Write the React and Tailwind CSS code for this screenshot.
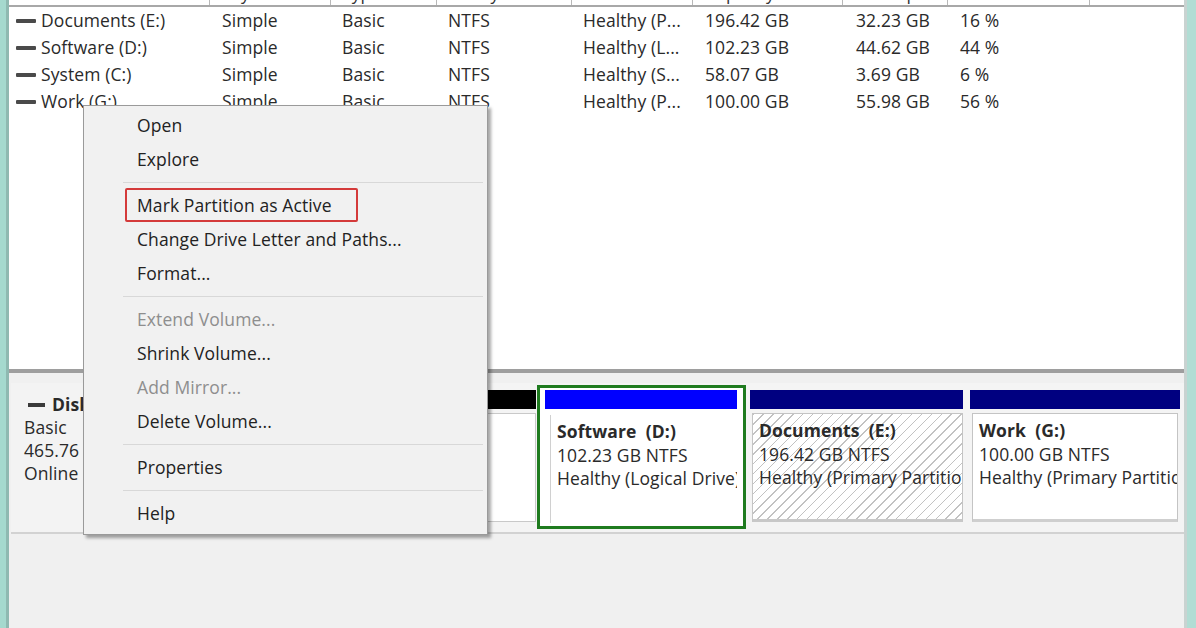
import React from "react";

const rows = [
  ["Documents (E:)", "Simple", "Basic", "NTFS", "Healthy (P...", "196.42 GB", "32.23 GB", "16 %"],
  ["Software (D:)", "Simple", "Basic", "NTFS", "Healthy (L...", "102.23 GB", "44.62 GB", "44 %"],
  ["System (C:)", "Simple", "Basic", "NTFS", "Healthy (S...", "58.07 GB", "3.69 GB", "6 %"],
  ["Work (G:)", "Simple", "Basic", "NTFS", "Healthy (P...", "100.00 GB", "55.98 GB", "56 %"],
];

const headers = ["Volume", "Layout", "Type", "File System", "Status", "Capacity", "Free Spa...", "% Free"];
const colClasses = [
  "w-[201px] pl-[7px]",
  "w-[121px] pl-[12px]",
  "w-[106px] pl-[11px]",
  "w-[135px] pl-[11px]",
  "w-[121px] pl-[11px]",
  "w-[150px] pl-[12px]",
  "w-[105px] pl-[13px]",
  "w-[142px] pl-[12px]",
];

const menu = [
  { t: "Open" },
  { t: "Explore" },
  { sep: true },
  { t: "Mark Partition as Active", red: true },
  { t: "Change Drive Letter and Paths..." },
  { t: "Format..." },
  { sep: true },
  { t: "Extend Volume...", dis: true },
  { t: "Shrink Volume..." },
  { t: "Add Mirror...", dis: true },
  { t: "Delete Volume..." },
  { sep: true },
  { t: "Properties" },
  { sep: true },
  { t: "Help" },
];

function VolIcon() {
  return <div className="w-[20px] h-[4px] bg-[#4a4a4a] rounded-[1px] mr-[5px] shrink-0" />;
}

export default function App() {
  return (
    <div className="w-[1196px] h-[628px] flex overflow-hidden relative bg-[#efefef] text-[#2a2a2a] font-['Open_Sans','Noto_Sans',sans-serif] text-[17.5px] tracking-[0.1px]">
      {/* left frame */}
      <div className="w-[9px] shrink-0 bg-[#a5d9ce] border-r-[3px] border-[#8fb9b1]" />

      {/* main */}
      <div className="flex-1 flex flex-col min-w-0">
        {/* list view */}
        <div className="h-[369px] bg-white overflow-hidden shrink-0">
          <div className="flex h-[26px] mt-[-19px] border-b-2 border-[#a8a8a8] text-[#333]">
            {headers.map((h, i) => (
              <div key={i} className={`${colClasses[i]} flex items-center border-r border-[#b8b8b8] whitespace-nowrap overflow-hidden`}>
                {h}
              </div>
            ))}
          </div>
          {rows.map((r, ri) => (
            <div key={ri} className="flex h-[27px] items-center">
              {r.map((c, ci) => (
                <div key={ci} className={`${colClasses[ci]} flex items-center whitespace-nowrap`}>
                  {ci === 0 && <VolIcon />}
                  {c}
                </div>
              ))}
            </div>
          ))}
        </div>
        <div className="h-[4px] bg-[#9e9e9e] shrink-0" />

        {/* graphical view */}
        <div className="flex-1 bg-[#f0f0f0] pt-[10px] pl-[2px]">
          <div className="flex h-[151px] border-b-2 border-[#d2d2d2] bg-[#f4f4f4]">
            {/* disk label */}
            <div className="w-[189px] shrink-0 pl-[13px] pt-[10px] leading-[23px] bg-[#f3f3f3]">
              <div className="flex items-center font-bold ml-[4px]">
                <div className="w-[17px] h-[4px] bg-[#3a3a3a] mr-[7px]" />
                Disk 0
              </div>
              <div>Basic</div>
              <div>465.76 GB</div>
              <div>Online</div>
            </div>
            {/* System partition */}
            <div className="w-[337px] shrink-0 flex flex-col pt-[7px] px-[1px]">
              <div className="h-[19px] bg-black" />
              <div className="mt-[4px] h-[109px] bg-white border border-[#c9c9c9]" />
            </div>
            {/* Software partition (selected) */}
            <div className="w-[209px] shrink-0 mt-[2px] h-[144px] border-[3px] border-[#1f7b1f] pt-[2px] pl-[5px] pr-[6px] flex flex-col bg-white">
              <div className="h-[19px] bg-[#0000ff]" />
              <div className="mt-[6px] ml-[5px] h-[108px] border-l border-[#d0d0d0] pl-[6px] pt-[5px] leading-[23.5px] whitespace-nowrap overflow-hidden">
                <div className="font-bold">Software&nbsp; (D:)</div>
                <div>102.23 GB NTFS</div>
                <div>Healthy (Logical Drive)</div>
              </div>
            </div>
            {/* Documents partition */}
            <div className="w-[219px] shrink-0 ml-[1px] flex flex-col pt-[7px] px-[3px]">
              <div className="h-[19px] bg-[#000080]" />
              <div className="mt-[4px] ml-[2px] h-[109px] border border-[#c4c4c4] border-b-[3px] border-b-[#c8c8c8] bg-[repeating-linear-gradient(135deg,#c2c2c2_0px,#c2c2c2_1px,#ffffff_1px,#ffffff_7px)] pl-[6px] pt-[5px] leading-[23.5px] whitespace-nowrap overflow-hidden">
                <div className="font-bold">Documents&nbsp; (E:)</div>
                <div>196.42 GB NTFS</div>
                <div>Healthy (Primary Partition)</div>
              </div>
            </div>
            {/* Work partition */}
            <div className="w-[216px] shrink-0 ml-[1px] flex flex-col pt-[7px] pl-[3px] pr-[3px]">
              <div className="h-[19px] bg-[#000080]" />
              <div className="mt-[4px] ml-[2px] mr-[2px] h-[109px] border border-[#c4c4c4] border-b-[3px] border-b-[#cfcfcf] bg-white pl-[6px] pt-[5px] leading-[23.5px] whitespace-nowrap overflow-hidden">
                <div className="font-bold">Work&nbsp; (G:)</div>
                <div>100.00 GB NTFS</div>
                <div>Healthy (Primary Partition)</div>
              </div>
            </div>
          </div>
        </div>
      </div>

      {/* right frame */}
      <div className="w-[12px] shrink-0 bg-[#b1ddd4] border-l-[3px] border-[#c9d3d1]" />

      {/* context menu */}
      <div className="absolute left-[83px] top-[105px] w-[405px] bg-[#f1f1f1] border border-[#9a9a9a] pt-[2px] pb-[4px] shadow-[3px_3px_3px_rgba(0,0,0,0.35)]">
        {menu.map((m, i) =>
          m.sep ? (
            <div key={i} className="h-[12px] flex items-center pl-[39px] pr-[4px]">
              <div className="h-[1px] w-full bg-[#d8d8d8]" />
            </div>
          ) : (
            <div
              key={i}
              className={`relative h-[34px] flex items-center pl-[53px] whitespace-nowrap ${m.dis ? "text-[#8e8e8e]" : "text-[#222]"}`}
            >
              {m.red && (
                <div className="absolute left-[41px] top-0 w-[233px] h-[34px] border-2 border-[#d43a3a] rounded-[2px]" />
              )}
              {m.t}
            </div>
          )
        )}
      </div>
    </div>
  );
}
